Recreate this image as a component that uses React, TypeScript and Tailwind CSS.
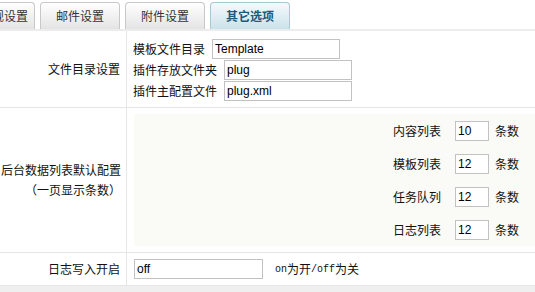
const cjk = "font-['Noto_Sans_CJK_SC',sans-serif]"

function Tab({
	label,
	active = false,
	first = false,
}: {
	label: string
	active?: boolean
	first?: boolean
}) {
	return (
		<div
			className={`flex h-[27px] w-[80px] shrink-0 items-center rounded-t-[4px] border border-b-0 text-[12px] ${
				first ? 'justify-end pr-[6px]' : 'justify-center'
			} ${
				active
					? 'border-[#a9c8d5] bg-gradient-to-b from-[#f4fafc] to-[#cbe2eb] font-bold text-[#1c5a78]'
					: 'border-[#c8c8c8] bg-gradient-to-b from-white to-[#e4e4e4] text-[#333]'
			}`}
		>
			{label}
		</div>
	)
}

function TextInput({ value, width }: { value: string; width: string }) {
	return (
		<div
			className={`flex h-[20px] items-center border border-[#c2c2c2] bg-white px-[2px] font-['Liberation_Sans',sans-serif] text-[12px] text-black ${width}`}
		>
			{value}
		</div>
	)
}

function CountRow({ label, value }: { label: string; value: string }) {
	return (
		<div className="flex h-[20px] items-center">
			<span className="w-[48px]">{label}</span>
			<div className="ml-[14px]">
				<TextInput value={value} width="w-[34px]" />
			</div>
			<span className="ml-[6px]">条数</span>
		</div>
	)
}

export default function App() {
	return (
		<div className={`h-[292px] w-[535px] overflow-hidden bg-white text-[12px] text-[#111] ${cjk}`}>
			{/* tabs */}
			<div className="flex h-[31px] items-end overflow-hidden border-b-2 border-[#ececec]">
				<div className="-ml-[45px] flex gap-[5px]">
					<Tab label="常规设置" first />
					<Tab label="邮件设置" />
					<Tab label="附件设置" />
					<Tab label="其它选项" active />
				</div>
			</div>

			{/* row 1 */}
			<div className="grid grid-cols-[127px_1fr] border-b border-[#e6e6e6]">
				<div className="flex items-center justify-end border-r border-[#e6e6e6] pr-[6px]">
					文件目录设置
				</div>
				<div className="flex flex-col gap-[1px] pb-[6px] pl-[6px] pt-[8px]">
					<div className="flex h-[20px] items-center">
						<span>模板文件目录</span>
						<div className="ml-[7px]">
							<TextInput value="Template" width="w-[128px]" />
						</div>
					</div>
					<div className="flex h-[20px] items-center">
						<span>插件存放文件夹</span>
						<div className="ml-[7px]">
							<TextInput value="plug" width="w-[128px]" />
						</div>
					</div>
					<div className="flex h-[20px] items-center">
						<span>插件主配置文件</span>
						<div className="ml-[7px]">
							<TextInput value="plug.xml" width="w-[128px]" />
						</div>
					</div>
				</div>
			</div>

			{/* row 2 */}
			<div className="grid grid-cols-[127px_1fr] border-b border-[#e6e6e6]">
				<div className="flex flex-col items-end justify-center border-r border-[#e6e6e6] pr-[5px] leading-[20px]">
					<span>后台数据列表默认配置</span>
					<span>（一页显示条数）</span>
				</div>
				<div className="pb-[6px] pl-[7px] pt-[6px]">
					<div className="flex flex-col items-end gap-[13px] bg-[#fafaf6] pb-[6px] pr-[16px] pt-[7px]">
						<CountRow label="内容列表" value="10" />
						<CountRow label="模板列表" value="12" />
						<CountRow label="任务队列" value="12" />
						<CountRow label="日志列表" value="12" />
					</div>
				</div>
			</div>

			{/* row 3 */}
			<div className="grid grid-cols-[127px_1fr] border-b border-[#e6e6e6]">
				<div className="flex items-center justify-end border-r border-[#e6e6e6] pr-[6px]">
					日志写入开启
				</div>
				<div className="flex items-center py-[6px] pl-[7px]">
					<TextInput value="off" width="w-[129px]" />
					<span className="ml-[12px] flex items-center">
						<span className="font-['Liberation_Mono',monospace] text-[10px]">on</span>
						为开
						<span className="font-['Liberation_Mono',monospace] text-[10px]">/off</span>
						为关
					</span>
				</div>
			</div>

			<div className="h-[8px] bg-[#efefef]" />
		</div>
	)
}
